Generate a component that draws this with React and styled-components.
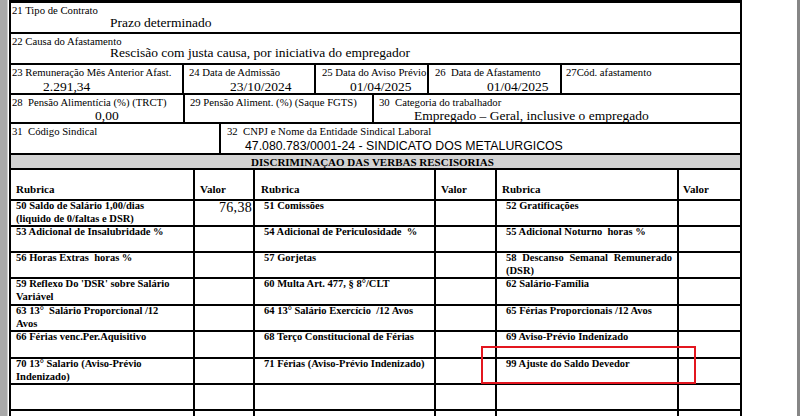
import React from 'react';
import styled, { createGlobalStyle } from 'styled-components';

const SERIF = '"Liberation Serif", Tinos, "Times New Roman", "DejaVu Serif", serif';

const GlobalStyle = createGlobalStyle`
  html, body { margin: 0; padding: 0; background: #fff; }
  body {
    width: 800px;
    height: 416px;
    overflow: hidden;
    font-family: ${SERIF};
    color: #000;
  }
`;

const Window = styled.div`
  position: relative;
  display: flex;
  width: 800px;
  height: 416px;
  overflow: hidden;
  background: #fff;
  font-family: ${SERIF};
`;

const LeftFrame = styled.div`
  flex: none;
  width: 7px;
  background: #a9a9a9;
  border-right: 1px solid #cfcfcf;
`;

const RightFrame = styled.div`
  flex: none;
  width: 3px;
  background: #868686;
`;

const Viewport = styled.div`
  flex: 1;
  padding-left: 1px;
`;

const Sheet = styled.div`
  width: 729px;
  border: 2px solid #000;
  border-top-width: 3px;
  border-bottom: none;
`;

const Row = styled.div`
  display: flex;
  height: ${p => p.$h}px;
  border-bottom: 2px solid #000;
  overflow: hidden;
`;

const Field = styled.div`
  flex: ${p => (p.$w ? 'none' : '1')};
  width: ${p => (p.$w ? `${p.$w}px` : 'auto')};
  box-sizing: border-box;
  padding-left: ${p => p.$pad ?? 5}px;
  & + & { border-left: 2px solid #000; }
`;

const Label = styled.div`
  font-size: 10.7px;
  line-height: 12px;
  padding-top: 1px;
  white-space: nowrap;
`;

const Value = styled.div`
  font-size: ${p => (p.$sans ? 12.3 : 13.5)}px;
  font-family: ${p => (p.$sans ? '"Liberation Sans", Arial, sans-serif' : SERIF)};
  line-height: 14px;
  margin-top: ${p => p.$mt ?? 0}px;
  padding-left: ${p => p.$x}px;
  white-space: nowrap;
`;

const Band = styled.div`
  height: 13px;
  background: #d3d3d3;
  border-bottom: 2px solid #000;
  font-size: 11px;
  font-weight: bold;
  line-height: 14px;
  text-align: center;
  padding-right: 6px;
`;

const Grid = styled.div`
  display: flex;
  height: ${p => p.$h}px;
  border-bottom: 2px solid #000;
  overflow: hidden;
`;

const Cell = styled.div`
  flex: ${p => (p.$w ? 'none' : '1')};
  width: ${p => (p.$w ? `${p.$w}px` : 'auto')};
  box-sizing: border-box;
  padding: 0 ${p => p.$right ?? 5}px 0 ${p => p.$pad ?? 5}px;
  & + & { border-left: 2px solid #000; }
`;

const HeadCell = styled(Cell)`
  display: flex;
  align-items: flex-end;
  padding-bottom: 4px;
  font-size: 11px;
  font-weight: bold;
  line-height: 12px;
`;

const ItemText = styled.div`
  font-size: 10.5px;
  font-weight: bold;
  line-height: 12.5px;
  margin-top: -1px;
  white-space: pre-wrap;
  text-align: ${p => (p.$justify ? 'justify' : 'left')};
`;

const Amount = styled.div`
  font-size: 14px;
  line-height: 14px;
  text-align: right;
  letter-spacing: 0.3px;
`;

const Highlight = styled.div`
  position: absolute;
  left: 481px;
  top: 346px;
  width: 215px;
  height: 38px;
  box-sizing: border-box;
  border: 2px solid #e3161f;
`;

const COLS = [182, 60, 181, 61, 182, null];
const PADS = [5, 0, 9, 0, 9, 0];
const RIGHT = [4, 1, 2, 1, 5, 1];

const items = [
  { h: 24, c: ['50 Saldo de Salário 1,00/dias\n(liquido de 0/faltas e DSR)', '76,38', '51 Comissões', '', '52 Gratificações', ''] },
  { h: 24, c: ['53 Adicional de Insalubridade %', '', '54 Adicional de Periculosidade  %', '', '55 Adicional Noturno  horas %', ''] },
  { h: 24, c: ['56 Horas Extras  horas %', '', '57 Gorjetas', '', '58 Descanso Semanal Remunerado (DSR)', ''], justify: 4 },
  { h: 25, c: ["59 Reflexo Do 'DSR' sobre Salário\nVariável", '', '60 Multa Art. 477, § 8°/CLT', '', '62 Salário-Família', ''] },
  { h: 24, c: ['63 13°  Salário Proporcional /12\nAvos', '', '64 13° Salário Exercício  /12 Avos', '', '65 Férias Proporcionais /12 Avos', ''] },
  { h: 25, c: ['66 Férias venc.Per.Aquisitivo', '', '68 Terço Constitucional de Férias', '', '69 Aviso-Prévio Indenizado', ''] },
  { h: 24, c: ['70 13° Salario (Aviso-Prévio\nIndenizado)', '', '71 Férias (Aviso-Prévio Indenizado)', '', '99 Ajuste do Saldo Devedor', ''] },
  { h: 24, c: ['', '', '', '', '', ''] },
  { h: 24, c: ['', '', '', '', '', ''] },
];

export default function App() {
  return (
    <Window>
      <GlobalStyle />
      <LeftFrame />
      <Viewport>
        <Sheet>
          <Row $h={29}>
            <Field $pad={1}>
              <Label>21 Tipo de Contrato</Label>
              <Value $x={98}>Prazo determinado</Value>
            </Field>
          </Row>
          <Row $h={29}>
            <Field $pad={1}>
              <Label>22 Causa do Afastamento</Label>
              <Value $x={98} $mt={-1}>Rescisão com justa causa, por iniciativa do empregador</Value>
            </Field>
          </Row>
          <Row $h={28}>
            <Field $w={171} $pad={1}>
              <Label>23 Remuneração Mês Anterior Afast.</Label>
              <Value $x={31} $mt={2}>2.291,34</Value>
            </Field>
            <Field $w={132}>
              <Label>24 Data de Admissão</Label>
              <Value $x={41} $mt={2}>23/10/2024</Value>
            </Field>
            <Field $w={113} $pad={6}>
              <Label>25 Data do Aviso Prévio</Label>
              <Value $x={28} $mt={2}>01/04/2025</Value>
            </Field>
            <Field $w={133} $pad={6}>
              <Label>26 &nbsp;Data de Afastamento</Label>
              <Value $x={52} $mt={2}>01/04/2025</Value>
            </Field>
            <Field $pad={4}>
              <Label>27Cód. afastamento</Label>
            </Field>
          </Row>
          <Row $h={27}>
            <Field $w={172} $pad={1}>
              <Label>28 &nbsp;Pensão Alimentícia (%) (TRCT)</Label>
              <Value $x={83} $mt={1}>0,00</Value>
            </Field>
            <Field $w={189}>
              <Label>29 Pensão Aliment. (%) (Saque FGTS)</Label>
            </Field>
            <Field $pad={5}>
              <Label>30 &nbsp;Categoria do trabalhador</Label>
              <Value $x={35} $mt={1}>Empregado – Geral, inclusive o empregado</Value>
            </Field>
          </Row>
          <Row $h={29}>
            <Field $w={208} $pad={1}>
              <Label>31 &nbsp;Código Sindical</Label>
            </Field>
            <Field $pad={6}>
              <Label>32 &nbsp;CNPJ e Nome da Entidade Sindical Laboral</Label>
              <Value $sans $x={18} $mt={2}>47.080.783/0001-24 - SINDICATO DOS METALURGICOS</Value>
            </Field>
          </Row>
          <Band>DISCRIMINAÇAO DAS VERBAS RESCISORIAS</Band>
          <Grid $h={29}>
            {['Rubrica', 'Valor', 'Rubrica', 'Valor', 'Rubrica', 'Valor'].map((t, i) => (
              <HeadCell key={i} $w={COLS[i]} $pad={i === 2 ? 6 : i === 5 ? 4 : 5}>{t}</HeadCell>
            ))}
          </Grid>
          {items.map((r, ri) => (
            <Grid key={ri} $h={r.h}>
              {r.c.map((t, i) => (
                <Cell key={i} $w={COLS[i]} $pad={PADS[i]} $right={RIGHT[i]}>
                  {i % 2 ? (t && <Amount>{t}</Amount>) : <ItemText $justify={r.justify === i}>{t}</ItemText>}
                </Cell>
              ))}
            </Grid>
          ))}
        </Sheet>
      </Viewport>
      <RightFrame />
      <Highlight />
    </Window>
  );
}
